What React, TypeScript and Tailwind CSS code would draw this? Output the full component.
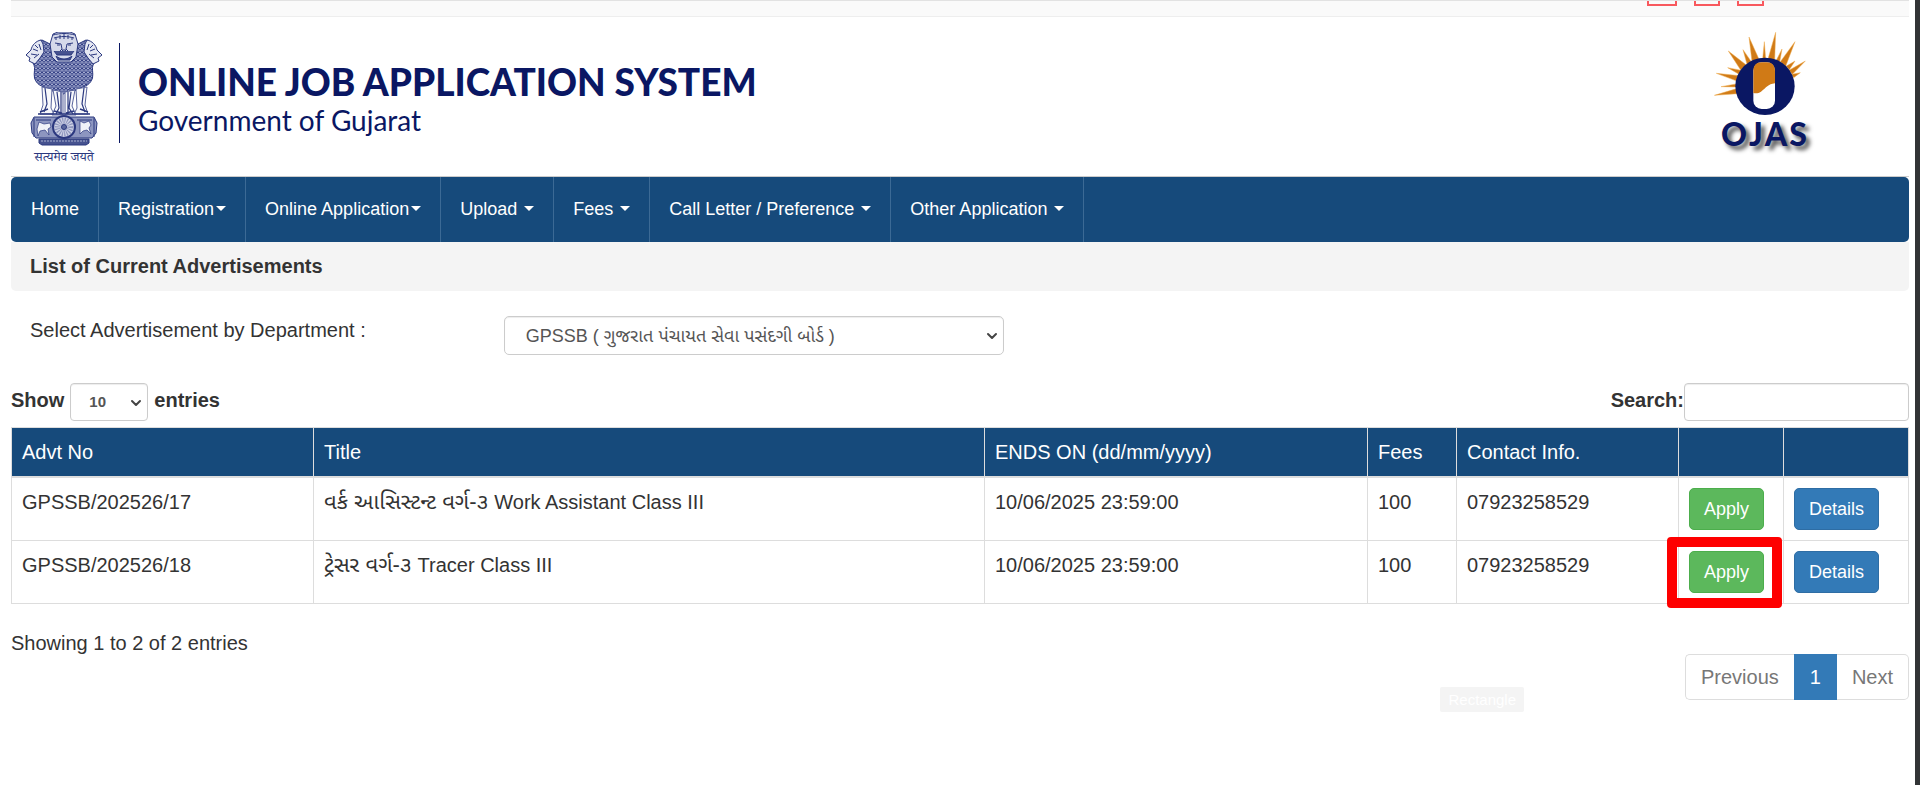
import React from 'react';
import { ChevronDown } from 'lucide-react';

const navItems = [
  { label: 'Home', caret: false, tight: false },
  { label: 'Registration', caret: true, tight: true },
  { label: 'Online Application', caret: true, tight: true },
  { label: 'Upload', caret: true, tight: false },
  { label: 'Fees', caret: true, tight: false },
  { label: 'Call Letter / Preference', caret: true, tight: false },
  { label: 'Other Application', caret: true, tight: false }
];

const adverts = [
  {
    no: 'GPSSB/202526/17',
    titleGu: 'વર્ક આસિસ્ટન્ટ વર્ગ-૩',
    title: 'Work Assistant Class III',
    endsOn: '10/06/2025 23:59:00',
    fees: '100',
    contact: '07923258529',
    marked: false
  },
  {
    no: 'GPSSB/202526/18',
    titleGu: 'ટ્રેસર વર્ગ-૩',
    title: 'Tracer Class III',
    endsOn: '10/06/2025 23:59:00',
    fees: '100',
    contact: '07923258529',
    marked: true
  }
];

const Emblem: React.FC = () => (
  <svg viewBox="0 0 76 114" className="w-[76px] h-[114px]" fill="none" stroke="#2b387f" strokeWidth="1" aria-hidden="true">
    <defs>
      <pattern id="mane" width="4" height="4" patternUnits="userSpaceOnUse">
        <rect width="4" height="4" fill="#a4abd0" stroke="none" />
        <path d="M0 0l2 2.5L4 0M0 2.5l2 2 2-2" stroke="#26337c" strokeWidth="1" />
      </pattern>
    </defs>
    {/* Body and manes */}
    <path
      d="M16 8C11 9 8 14 7 19L5 27l3 6c1.500 3-.5 8 .5 13 2 6 6 8 10 9l8 4 6-1 5 4 5-4 6 1 8-4c4-1 8-3 10-9 1-5-1-10 .5-13l3-6-2-8C68 14 65 9 60 8l-8 4H24z"
      fill="url(#mane)"
    />
    {/* Side heads */}
    <path d="M15 8c-5 1-9 5-10 10l-5 5 4 3-1 3 6 3 5-6 4-6-1-8z" fill="#e4e7f2" />
    <path d="M7 17l5 2M5 22l6 1M8 26l5-4M13 12l2 6M9 13l3 3" />
    <path d="M61 8c5 1 9 5 10 10l5 5-4 3 1 3-6 3-5-6-4-6 1-8z" fill="#e4e7f2" />
    <path d="M69 17l-5 2M71 22l-6 1M68 26l-5-4M63 12l-2 6M67 13l-3 3" />
    {/* Front head */}
    <path d="M27 2l5-2h12l5 2 3 10-2 13-5 5H31l-5-5-2-13z" fill="#d5d9ea" />
    <path d="M27 3c7-2 15-2 22 0M28 6c7-2 13-2 20 0M29 11l6 1 1 5-3 3M47 11l-6 1-1 5 3 3M31 13h3M42 13h3M36 18h4l-2 2zM30 8v-3M34 7V3M38 7V2M42 7V3M46 8V5" />
    <path d="M28 19l3 4h14l3-4M30 24c5 4 11 4 16 0l-2 4H32z" fill="#46528f" />
    {/* Legs */}
    <path
      d="M16 55l1 18-3 9h14l-3-6 1-19zM27 58l3 16-4 9h11V60zM39 60v23h11l-4-9 3-16zM50 57l1 19-3 6h14l-3-9 2-18z"
      fill="#f7f8fb"
      stroke="#5a659d"
    />
    <path d="M19 56l2 16-3 8M31 60l2 16-3 6M35 60v20M42 60v20M45 60l-2 16 4 6M58 56l-2 16 3 8" strokeWidth="1.2" />
    <path d="M12 82h52M14 80l8-3M62 80l-8-3M28 79l8 2M48 79l-8 2" strokeWidth="1.5" />
    {/* Abacus */}
    <path d="M8 85h60l3 6-1 10-4 5H10l-4-5-1-10z" fill="#8d96c0" />
    <path d="M13 90l5 2 6-1 1 4-3 2 1 6-4-5-5 1-2 5-1-7zM54 89l4 2 5-2 2 4-2 3 2 6-4-4-4 1-3 3z" fill="#f0f2f8" strokeWidth=".7" />
    <path d="M8 86v19M68 86v19M10 88h15M51 88h15" />
    <circle cx="38" cy="95" r="11" fill="#d0d4e7" strokeWidth="2" />
    <circle cx="38" cy="95" r="6" strokeWidth="7" strokeDasharray="1 1" opacity=".4" />
    <circle cx="38" cy="95" r="2.5" fill="#5c689e" />
    <path d="M13 107h50v4l-3 2H16l-3-2z" fill="#46528f" />
    <path d="M15 109h46" stroke="#aab2d2" strokeDasharray="2 1" />
  </svg>
);

const OjasLogo: React.FC = () => (
  <div className="flex flex-col items-end w-[94px]">
    <svg viewBox="36 18 282 255" className="w-[94px] h-[85px]" aria-hidden="true">
      <path
        fill="#d07a16"
        stroke="#f0ae50"
        strokeWidth="1.5"
        d="M40 211L110 190V206zM60 185L110 176V186zM46 145L110 169 116 152zM80 128L118 150 126 137zM82 78L119 135 137 121zM126 74L138 118 151 110zM144 36L153 110 174 103zM190 50L185 102H194zM224 22L201 102 221 106zM243 72L226 106 236 112zM282 50L238 110 254 124zM282 108L255 124 265 134zM313 108L264 136 274 148zM298 143L272 148 278 158z"
      />
      <ellipse cx="192" cy="184" rx="89" ry="86" fill="#0a1763" />
      <rect x="157" y="112" width="65" height="140" rx="25" fill="#fff" />
      <path d="M157 204V137c0-15 9-25 25-25h15c16 0 25 10 25 25v38c-22 2-25 13-42 25-8 5-14 6-23 4z" fill="#d07a16" />
    </svg>
    <div className="flex justify-between w-[86px] font-[Lato,sans-serif] text-[32px] leading-[36px] font-black text-[#0a1763] [text-shadow:4px_4px_4px_#555]">
      <span>O</span>
      <span>J</span>
      <span>A</span>
      <span>S</span>
    </div>
  </div>
);

const App: React.FC = () => {
  return (
    <div className="min-h-screen flex bg-white pr-1 font-['Liberation_Sans',Arial,'Noto_Sans_Gujarati',sans-serif] text-xl leading-7 text-[#333]">
      <div className="relative flex-1 min-w-0 pl-[11px] pr-[6px]">
        {/* Top strip */}
        <div className="flex justify-end gap-[17px] h-[17px] pr-[145px] bg-[#fafafa] border-t border-b border-t-[#e2e2e2] border-b-[#eee]">
          <span className="w-[30px] h-[5px] border-2 border-t-0 border-[#f8595e]"></span>
          <span className="w-[26px] h-[5px] border-2 border-t-0 border-[#f8595e]"></span>
          <span className="w-[27px] h-[5px] border-2 border-t-0 border-[#f8595e]"></span>
        </div>

        {/* Header */}
        <header className="flex items-start justify-between h-[160px] pt-[14px] pl-[15px] pr-[102px] border-b border-[#ccc] text-[#0a1763]">
          <div className="flex">
            <div className="flex flex-col items-center gap-1 pt-px">
              <Emblem />
              <span className="font-['Noto_Serif_Devanagari','Noto_Sans_Devanagari',serif] text-[13px] leading-[18px] text-[#2b387f] whitespace-nowrap">सत्यमेव जयते</span>
            </div>
            <div className="mt-3 ml-[17px] w-px h-[100px] bg-[#0a1763]"></div>
            <div className="ml-[18px] pt-7 font-[Lato,'Open_Sans',sans-serif]">
              <h1 className="text-[37px] leading-[46px] font-black">ONLINE JOB APPLICATION SYSTEM</h1>
              <p className="text-[28px] leading-[30px]">Government of Gujarat</p>
            </div>
          </div>
          <OjasLogo />
        </header>

        {/* Main navigation */}
        <nav className="flex h-[65px] pl-px rounded-[5px] bg-[#164a7b] text-lg text-white">
          {navItems.map(({ label, caret, tight }) => (
            <a key={label} href="#" className="flex items-center px-[19px] pb-0.5 border-r border-[#3c6a95] whitespace-nowrap">
              {label}
              {caret && (
                <span className={`${tight ? 'ml-0.5' : 'ml-[7px]'} border-x-[5px] border-t-[5px] border-x-transparent border-t-white`}></span>
              )}
            </a>
          ))}
        </nav>

        <h2 className="h-[49px] px-[19px] pt-[10px] rounded-b-[5px] bg-[#f4f4f4] font-bold">List of Current Advertisements</h2>

        {/* Department filter */}
        <div className="flex items-start pt-[25px] pl-[19px]">
          <label htmlFor="department" className="w-1/4">Select Advertisement by Department :</label>
          <div className="relative w-[500px] ml-1">
            <select
              id="department"
              className="appearance-none w-full h-[39px] pl-[21px] pr-8 rounded-[5px] border border-[#ccc] bg-white text-lg text-[#555] shadow-[inset_0_1px_1px_rgba(0,0,0,0.075)]"
            >
              <option>GPSSB ( ગુજરાત પંચાયત સેવા પસંદગી બોર્ડ )</option>
            </select>
            <ChevronDown className="absolute right-1 top-3 h-4 w-4 text-[#444] pointer-events-none" strokeWidth={3} />
          </div>
        </div>

        {/* Table controls */}
        <div className="flex justify-between pt-7 font-bold">
          <div className="flex items-start">
            <label htmlFor="page-size" className="pt-[3px]">Show</label>
            <div className="relative mx-[6px]">
              <select
                id="page-size"
                className="appearance-none block w-[78px] h-[38px] pl-[18px] rounded-[4px] border border-[#ccc] bg-white text-[15px] text-[#555] shadow-[inset_0_1px_1px_rgba(0,0,0,0.075)]"
              >
                <option>10</option>
              </select>
              <ChevronDown className="absolute right-1 top-3 h-4 w-4 text-[#444] pointer-events-none" strokeWidth={3} />
            </div>
            <span className="pt-[3px]">entries</span>
          </div>
          <div className="flex items-start">
            <label htmlFor="search" className="pt-[3px]">Search:</label>
            <input
              id="search"
              type="search"
              className="w-[225px] h-[38px] px-3 rounded-[4px] border border-[#ccc] bg-white text-[15px] shadow-[inset_0_1px_1px_rgba(0,0,0,0.075)]"
            />
          </div>
        </div>

        {/* Adverts */}
        <table className="w-full mt-[6px] table-fixed border-collapse border border-[#ddd] text-left">
          <colgroup>
            <col className="w-[302px]" />
            <col />
            <col className="w-[383px]" />
            <col className="w-[89px]" />
            <col className="w-[222px]" />
            <col className="w-[105px]" />
            <col className="w-[125px]" />
          </colgroup>
          <thead>
            <tr className="h-[49px] bg-[#164a7b] text-white">
              {['Advt No', 'Title', 'ENDS ON (dd/mm/yyyy)', 'Fees', 'Contact Info.', '', ''].map((head, i) => (
                <th key={i} className="px-[10px] border border-[#ddd] border-b-2 font-normal">{head}</th>
              ))}
            </tr>
          </thead>
          <tbody>
            {adverts.map((ad) => (
              <tr key={ad.no} className="h-[63px] align-top">
                <td className="px-[10px] pt-[10px] border border-[#ddd]">{ad.no}</td>
                <td className="px-[10px] pt-[10px] border border-[#ddd]">
                  <span className="text-[22px] leading-none">{ad.titleGu}</span> {ad.title}
                </td>
                <td className="px-[10px] pt-[10px] border border-[#ddd]">{ad.endsOn}</td>
                <td className="px-[10px] pt-[10px] border border-[#ddd]">{ad.fees}</td>
                <td className="px-[10px] pt-[10px] border border-[#ddd]">{ad.contact}</td>
                <td className="px-[10px] py-[10px] border border-[#ddd]">
                  <div className="relative w-fit">
                    <button className="block h-[42px] px-[14px] rounded-[5px] border border-[#4cae4c] bg-[#5cb85c] text-lg text-white">Apply</button>
                    {ad.marked && (
                      <div className="absolute -left-[22px] -right-[18px] -top-[14px] -bottom-[15px] border-[10px] border-[#fe0000] rounded-[4px] pointer-events-none"></div>
                    )}
                  </div>
                </td>
                <td className="px-[10px] pt-[10px] border border-[#ddd]">
                  <button className="block h-[42px] px-[14px] rounded-[5px] border border-[#2e6da4] bg-[#337ab7] text-lg text-white">Details</button>
                </td>
              </tr>
            ))}
          </tbody>
        </table>

        {/* Table footer */}
        <div className="flex justify-between items-start pt-[25px]">
          <p>Showing 1 to 2 of 2 entries</p>
          <div className="flex mt-[25px] h-[46px] text-[#777]">
            <button className="px-[15px] rounded-l-[5px] border border-r-0 border-[#ddd]">Previous</button>
            <button className="px-4 bg-[#337ab7] text-white">1</button>
            <button className="px-[15px] rounded-r-[5px] border border-l-0 border-[#ddd]">Next</button>
          </div>
        </div>

        {/* Shape tool hint */}
        <span className="absolute right-[391px] top-[687px] px-2 rounded-[2px] bg-[#f4f4f4] text-[15px] leading-[25px] text-white">Rectangle</span>
      </div>
      <div className="w-[5px] bg-[#323436]"></div>
    </div>
  );
};

export default App;
